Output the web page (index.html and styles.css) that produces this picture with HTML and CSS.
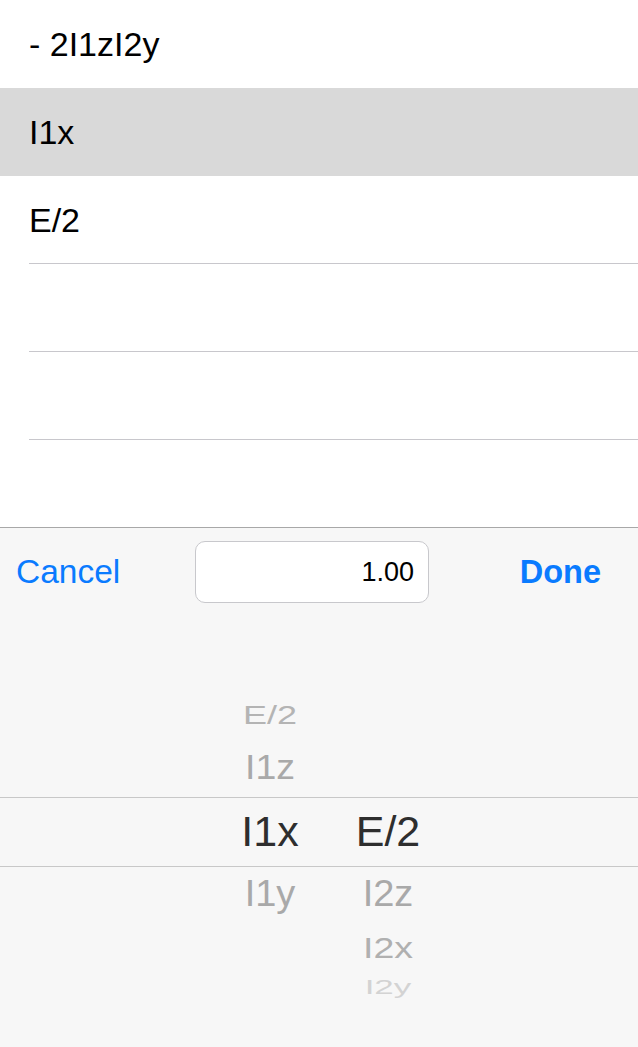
FILE: index.html
```html
<!DOCTYPE html>
<html>
<head>
<meta charset="utf-8">
<link rel="stylesheet" href="styles.css">
</head>
<body>
<div class="screen">
  <div class="table">
    <div class="row"><span class="cell-text">- 2I1zI2y</span></div>
    <div class="row selected"><span class="cell-text">I1x</span></div>
    <div class="row sep"><span class="cell-text">E/2</span></div>
    <div class="row sep"></div>
    <div class="row sep"></div>
    <div class="row"></div>
  </div>
  <div class="toolbar">
    <span class="btn cancel">Cancel</span>
    <div class="field"><span class="field-text">1.00</span></div>
    <span class="btn done">Done</span>
  </div>
  <div class="picker">
    <div class="band"></div>
    <div class="col col-left">
      <div class="item e2-top">E/2</div>
      <div class="item i1z">I1z</div>
      <div class="item sel">I1x</div>
      <div class="item i1y">I1y</div>
    </div>
    <div class="col col-right">
      <div class="item sel">E/2</div>
      <div class="item i2z">I2z</div>
      <div class="item i2x">I2x</div>
      <div class="item i2y">I2y</div>
    </div>
  </div>
</div>
</body>
</html>
```

FILE: styles.css
```css
html, body {
  margin: 0;
  padding: 0;
  background: #f7f7f7;
}
body {
  font-family: "Liberation Sans", Arial, Helvetica, sans-serif;
  width: 638px;
  height: 1047px;
  overflow: hidden;
}
.screen {
  width: 638px;
  height: 1047px;
  display: flex;
  flex-direction: column;
}
.table {
  height: 527px;
  overflow: hidden;
  background: #ffffff;
  flex: 0 0 auto;
}
.row {
  height: 88px;
  display: flex;
  align-items: center;
  padding-left: 29px;
  box-sizing: border-box;
  position: relative;
}
.row.selected {
  background: #d9d9d9;
}
.row.sep::after {
  content: "";
  position: absolute;
  left: 29px;
  right: 0;
  bottom: 0;
  height: 1px;
  background: #c8c7cc;
}
.cell-text {
  font-size: 34px;
  color: #000;
  line-height: 40px;
}
.toolbar {
  flex: 0 0 auto;
  height: 88px;
  border-top: 1px solid #a8a8a8;
  background: #f7f7f7;
  display: flex;
  align-items: center;
  padding: 0 37px 0 16px;
}
.btn {
  color: #0a7bff;
  font-size: 33.5px;
  line-height: 40px;
}
.cancel {
  flex: 0 0 179px;
}
.done {
  margin-left: auto;
  font-weight: bold;
  font-size: 32.5px;
}
.field {
  width: 234px;
  height: 62px;
  box-sizing: border-box;
  border: 1px solid #c8c8cc;
  border-radius: 10px;
  background: #ffffff;
  display: flex;
  align-items: center;
  justify-content: flex-end;
  padding-right: 14px;
}
.field-text {
  font-size: 27px;
  color: #000;
}
.picker {
  flex: 1 1 auto;
  position: relative;
  display: flex;
  align-items: flex-start;
  padding-left: 220px;
  gap: 18px;
  background: #f7f7f7;
}
.band {
  position: absolute;
  left: 0;
  right: 0;
  top: 181px;
  height: 68px;
  border-top: 1px solid #c8c8c8;
  border-bottom: 1px solid #c8c8c8;
}
.col {
  width: 100px;
  display: flex;
  flex-direction: column;
  align-items: center;
}
.col-left { padding-top: 75px; }
.col-right { padding-top: 181px; }
.item {
  display: flex;
  align-items: center;
  justify-content: center;
  white-space: nowrap;
  line-height: 1;
}
.sel {
  height: 69px;
  font-size: 43px;
  color: #2e2e2e;
}
.e2-top {
  height: 48px;
  font-size: 36px;
  color: #b4b4b4;
  transform: scaleY(0.72);
}
.i1z {
  height: 58px;
  font-size: 37.5px;
  color: #a9a9a9;
  transform: scaleY(0.93);
}
.i1y, .i2z {
  height: 55px;
  font-size: 38px;
  color: #a9a9a9;
  transform: scaleY(0.95);
}
.i2x {
  height: 56px;
  font-size: 37.5px;
  color: #b0b0b0;
  transform: scaleY(0.78);
}
.i2y {
  height: 20px;
  font-size: 35px;
  color: #d3d3d3;
  transform: scaleY(0.56);
}
```
